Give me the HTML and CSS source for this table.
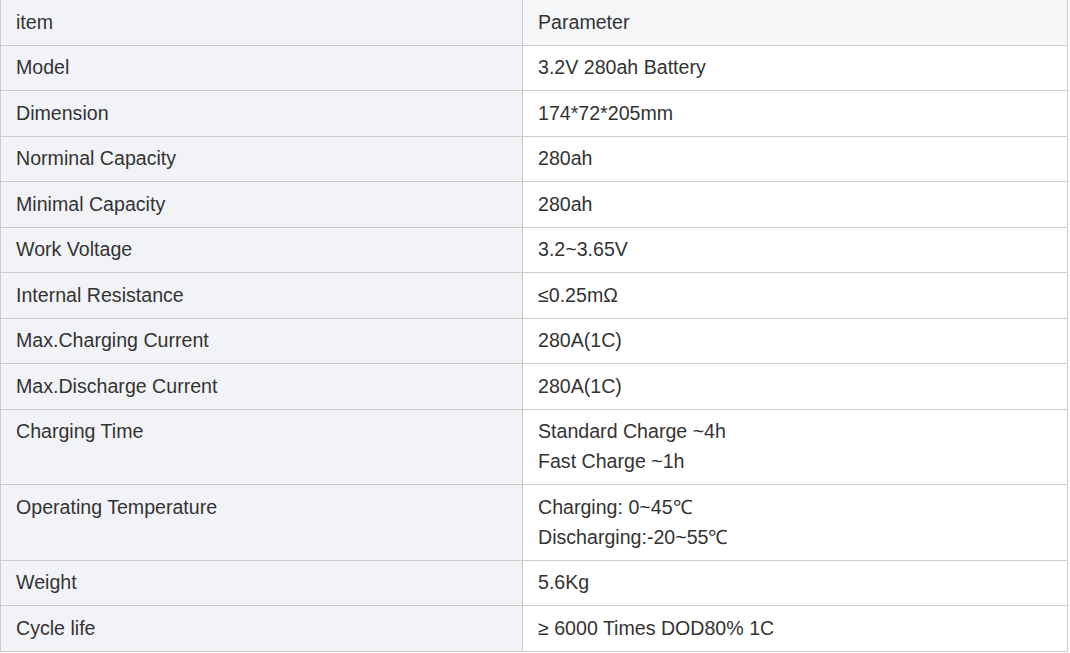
FILE: index.html
```html
<!DOCTYPE html>
<html>
<head>
<meta charset="utf-8">
<link rel="stylesheet" href="styles.css">
</head>
<body>
<table class="spec">
  <thead>
    <tr><th class="key">item</th><th class="val">Parameter</th></tr>
  </thead>
  <tbody>
    <tr><td class="key">Model</td><td class="val">3.2V 280ah Battery</td></tr>
    <tr><td class="key">Dimension</td><td class="val">174*72*205mm</td></tr>
    <tr><td class="key">Norminal Capacity</td><td class="val">280ah</td></tr>
    <tr><td class="key">Minimal Capacity</td><td class="val">280ah</td></tr>
    <tr><td class="key">Work Voltage</td><td class="val">3.2~3.65V</td></tr>
    <tr><td class="key">Internal Resistance</td><td class="val">≤0.25mΩ</td></tr>
    <tr><td class="key">Max.Charging Current</td><td class="val">280A(1C)</td></tr>
    <tr><td class="key">Max.Discharge Current</td><td class="val">280A(1C)</td></tr>
    <tr><td class="key">Charging Time</td><td class="val">Standard Charge ~4h<br>Fast Charge ~1h</td></tr>
    <tr><td class="key">Operating Temperature</td><td class="val">Charging: 0~45℃<br>Discharging:-20~55℃</td></tr>
    <tr><td class="key">Weight</td><td class="val">5.6Kg</td></tr>
    <tr><td class="key">Cycle life</td><td class="val">≥ 6000 Times DOD80% 1C</td></tr>
  </tbody>
</table>
</body>
</html>
```
FILE: styles.css
```css
html, body {
  margin: 0;
  padding: 0;
  background: #ffffff;
}
.spec {
  border-collapse: collapse;
  width: 1068px;
  margin-top: -1px;
  font-family: "Liberation Sans", Arial, sans-serif;
  font-size: 19.6px;
  line-height: 30px;
  color: #333333;
}
.spec th,
.spec td {
  border: 1px solid #cccccc;
  padding: 6.5px 15px 8px;
  text-align: left;
  vertical-align: top;
  font-weight: normal;
}
.spec .key {
  width: 491px;
  background: #f2f3f7;
}
.spec .val {
  background: #ffffff;
}
.spec thead .val {
  background: #f5f6f8;
}
```
